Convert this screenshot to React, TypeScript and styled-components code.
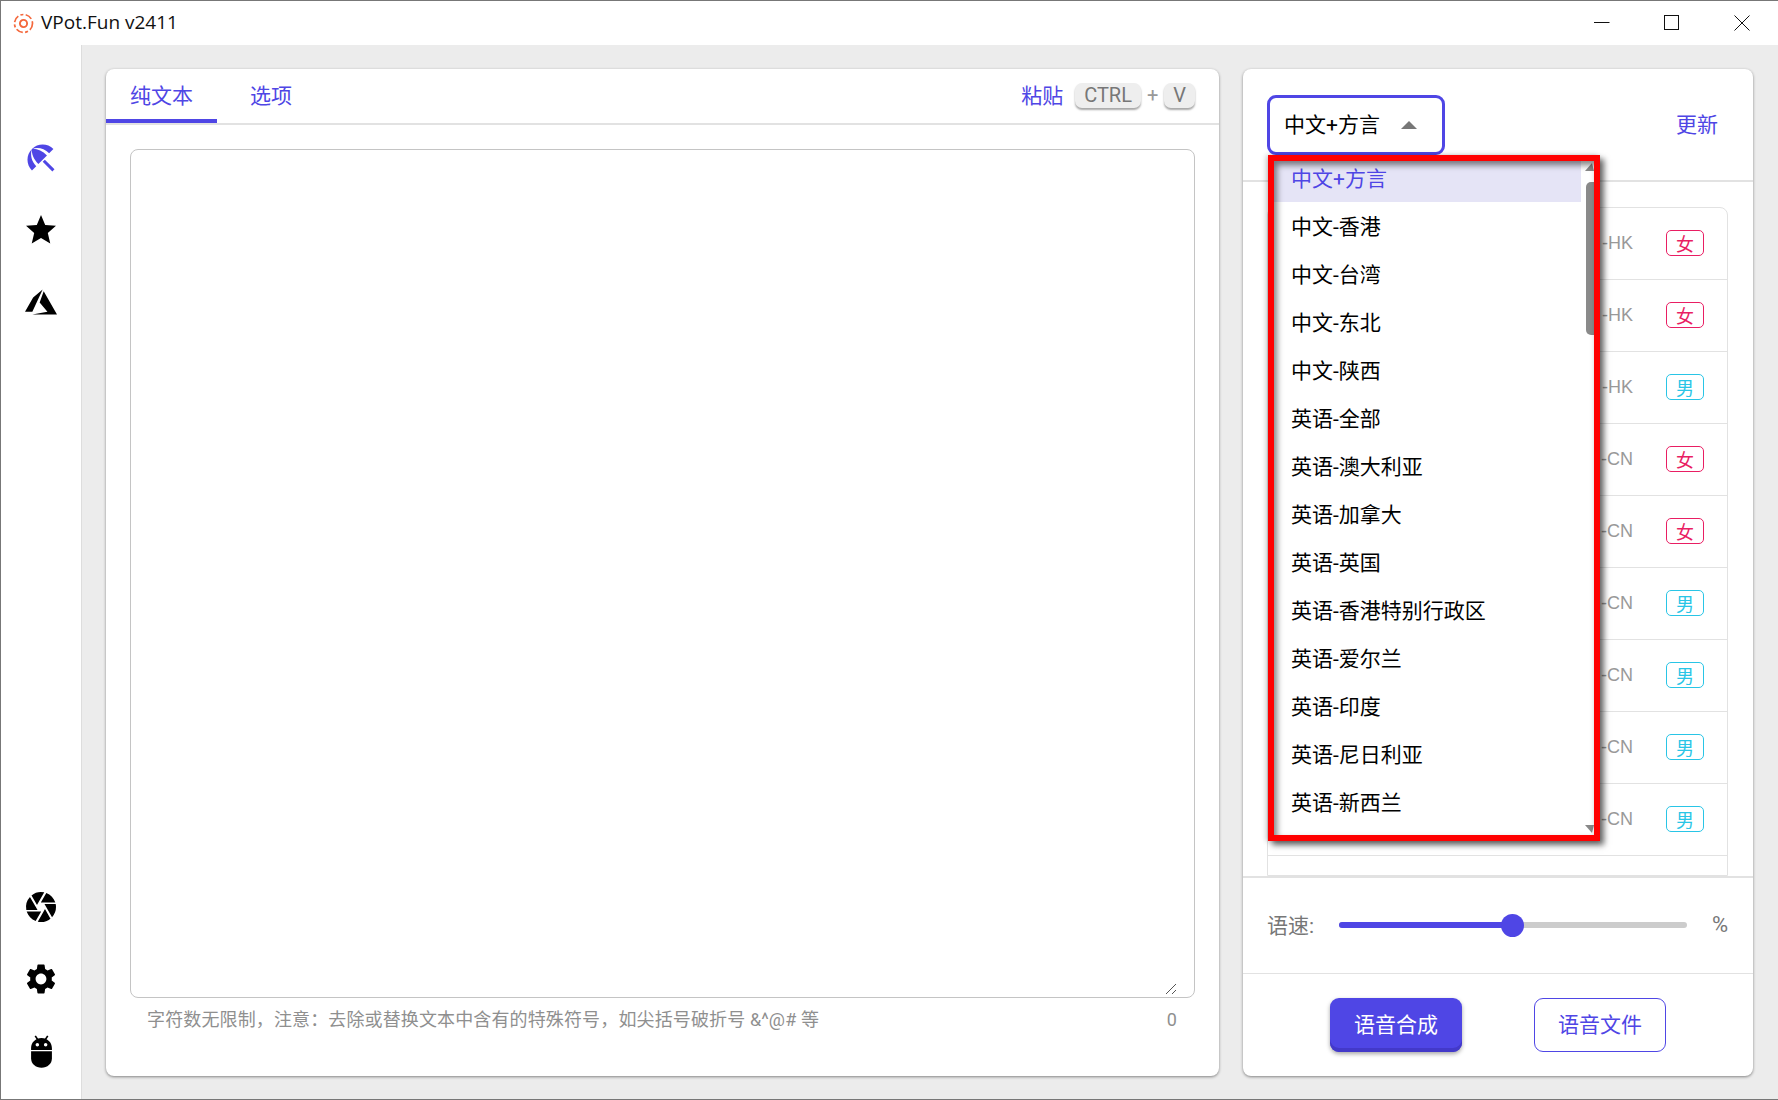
import React from 'react'
import styled, { createGlobalStyle } from 'styled-components'
import { MdBeachAccess, MdStar, MdCamera, MdSettings } from 'react-icons/md'

const accent = '#4f46e5'
const uiFont = `Roboto, "Noto Sans CJK SC", sans-serif`

const GlobalStyle = createGlobalStyle`
  html, body {
    margin: 0;
    padding: 0;
    background: #fff;
    font-family: ${uiFont};
  }
`

const regions = [
  '中文+方言', '中文-香港', '中文-台湾', '中文-东北', '中文-陕西', '英语-全部', '英语-澳大利亚',
  '英语-加拿大', '英语-英国', '英语-香港特别行政区', '英语-爱尔兰', '英语-印度', '英语-尼日利亚', '英语-新西兰',
]

const voices = [
  { code: '-HK', gender: '女' },
  { code: '-HK', gender: '女' },
  { code: '-HK', gender: '男' },
  { code: '-CN', gender: '女' },
  { code: '-CN', gender: '女' },
  { code: '-CN', gender: '男' },
  { code: '-CN', gender: '男' },
  { code: '-CN', gender: '男' },
  { code: '-CN', gender: '男' },
]

const AzureIcon = () => (
  <svg width="32" height="32" viewBox="0 0 24 24" fill="currentColor">
    <path d="M5.483 21.3H24L14.025 4.013l-3.038 8.347 5.836 6.938L5.483 21.3zM13.23 2.7L6.105 8.677 0 19.253h5.505v.014L13.23 2.7z" />
  </svg>
)

const BotIcon = () => (
  <svg width="25" height="38" viewBox="0 0 24 36" fill="currentColor">
    <path d="M6 3.5L8.6 7.4M18 3.5L15.4 7.4" stroke="currentColor" strokeWidth="1.6" fill="none" />
    <path fillRule="evenodd" d="M12 5.5c5.6 0 10 4.2 10 9.5v2H2v-2c0-5.3 4.4-9.5 10-9.5zM8 10.2a1.7 1.7 0 100 3.4 1.7 1.7 0 000-3.4zm8 0a1.7 1.7 0 100 3.4 1.7 1.7 0 000-3.4z" />
    <path d="M2 18.2h20V25c0 5.5-4.4 9-10 9S2 30.5 2 25z" />
  </svg>
)

const LogoIcon = () => (
  <svg width="21" height="21" viewBox="0 0 21 21" fill="none" stroke="#f4683c">
    <circle cx="10.5" cy="10.5" r="9" strokeWidth="1.7" strokeDasharray="7 2.4 3 2.4" />
    <circle cx="10.5" cy="10.5" r="3.6" strokeWidth="1.9" />
  </svg>
)

const ResizeGrip = () => (
  <svg width="12" height="12" viewBox="0 0 12 12" stroke="#555" fill="none">
    <path d="M1 11L11 1M7 11l4-4" />
  </svg>
)

export default function App() {
  return (
    <Window>
      <GlobalStyle />
      <TitleBar>
        <LogoIcon />
        <AppName>VPot.Fun v2411</AppName>
        <WindowControls>
          <svg width="16" height="16" viewBox="0 0 16 16" stroke="#111" fill="none">
            <path d="M0 7.5h15.5" />
          </svg>
          <svg width="16" height="16" viewBox="0 0 16 16" stroke="#111" fill="none">
            <rect x="0.5" y="0.5" width="14" height="14" />
          </svg>
          <svg width="16" height="16" viewBox="0 0 16 16" stroke="#111" fill="none">
            <path d="M0.5 0.5l15 15M15.5 0.5l-15 15" />
          </svg>
        </WindowControls>
      </TitleBar>
      <Body>
        <Sidebar>
          <NavGroup>
            <NavIcon $active><MdBeachAccess size={36} /></NavIcon>
            <NavIcon><MdStar size={36} /></NavIcon>
            <NavIcon><AzureIcon /></NavIcon>
          </NavGroup>
          <NavGroup>
            <NavIcon><MdCamera size={36} /></NavIcon>
            <NavIcon><MdSettings size={36} /></NavIcon>
            <NavIcon><BotIcon /></NavIcon>
          </NavGroup>
        </Sidebar>
        <Content>
          <EditorCard>
            <TabBar>
              <Tab $active>纯文本</Tab>
              <Tab>选项</Tab>
              <PasteHint>
                <PasteLabel>粘贴</PasteLabel>
                <Kbd>CTRL</Kbd>
                <Plus>+</Plus>
                <Kbd>V</Kbd>
              </PasteHint>
            </TabBar>
            <EditorBody>
              <TextBoxWrap>
                <TextBox />
                <GripSpot><ResizeGrip /></GripSpot>
              </TextBoxWrap>
              <HintRow>
                <span>字符数无限制，注意：去除或替换文本中含有的特殊符号，如尖括号破折号 &amp;^@# 等</span>
                <span>0</span>
              </HintRow>
            </EditorBody>
          </EditorCard>

          <VoiceCard>
            <VoiceHeader>
              <RegionSelect>
                中文+方言
                <Caret />
              </RegionSelect>
              <UpdateLink>更新</UpdateLink>
            </VoiceHeader>
            <VoiceListArea>
              <VoiceList>
                {voices.map((v, i) => (
                  <VoiceRow key={i}>
                    <VoiceCode>{v.code}</VoiceCode>
                    <GenderTag $female={v.gender === '女'}>{v.gender}</GenderTag>
                  </VoiceRow>
                ))}
              </VoiceList>
            </VoiceListArea>
            <SpeedRow>
              <SpeedLabel>语速:</SpeedLabel>
              <SliderTrack>
                <SliderFill />
                <SliderThumb />
              </SliderTrack>
              <SpeedUnit>%</SpeedUnit>
            </SpeedRow>
            <ActionRow>
              <PrimaryButton>语音合成</PrimaryButton>
              <OutlineButton>语音文件</OutlineButton>
            </ActionRow>

            <RegionMenu>
              <RegionList>
                {regions.map((r, i) => (
                  <RegionItem key={r} $selected={i === 0}>{r}</RegionItem>
                ))}
              </RegionList>
              <ScrollRail>
                <ArrowUp />
                <ScrollThumb />
                <ArrowDown />
              </ScrollRail>
            </RegionMenu>
          </VoiceCard>
        </Content>
      </Body>
    </Window>
  )
}

const Window = styled.div`
  box-sizing: border-box;
  width: 1778px;
  height: 1100px;
  display: flex;
  flex-direction: column;
  border: 1px solid #777;
  border-right: none;
  overflow: hidden;
  background: #fff;
`

const TitleBar = styled.header`
  height: 44px;
  flex: none;
  display: flex;
  align-items: center;
  padding-left: 12px;
`

const AppName = styled.div`
  margin-left: 7px;
  padding-bottom: 2px;
  font-family: "Open Sans", sans-serif;
  font-size: 19px;
  color: #111;
`

const WindowControls = styled.div`
  margin-left: auto;
  margin-right: 28px;
  display: flex;
  align-items: center;
  gap: 54px;
`

const Body = styled.div`
  flex: 1;
  min-height: 0;
  display: flex;
`

const Sidebar = styled.nav`
  box-sizing: border-box;
  width: 81px;
  flex: none;
  border-right: 1px solid #ddd;
  display: flex;
  flex-direction: column;
  justify-content: space-between;
  padding: 95px 0 30px;
`

const NavGroup = styled.div`
  display: flex;
  flex-direction: column;
  gap: 36px;
`

const NavIcon = styled.div<{ $active?: boolean }>`
  height: 36px;
  display: flex;
  align-items: center;
  justify-content: center;
  color: ${p => (p.$active ? accent : '#000')};
`

const Content = styled.main`
  flex: 1;
  min-width: 0;
  display: flex;
  gap: 24px;
  padding: 24px 25px 23px 24px;
  background: #ececec;
`

const Card = styled.section`
  background: #fff;
  border-radius: 8px;
  box-shadow: 0 1px 3px rgba(0, 0, 0, 0.45);
`

const EditorCard = styled(Card)`
  width: 1113px;
  flex: none;
  display: flex;
  flex-direction: column;
`

const TabBar = styled.div`
  box-sizing: border-box;
  height: 56px;
  flex: none;
  display: flex;
  align-items: stretch;
  border-bottom: 2px solid #e2e2e2;
  padding-right: 24px;
`

const Tab = styled.div<{ $active?: boolean }>`
  box-sizing: border-box;
  padding: 0 24px 1px;
  display: flex;
  align-items: center;
  font-size: 21px;
  color: ${accent};
  margin-right: 9px;
  border-bottom: 4px solid ${p => (p.$active ? accent : 'transparent')};
`

const PasteHint = styled.div`
  margin-left: auto;
  padding-bottom: 2px;
  display: flex;
  align-items: center;
`

const PasteLabel = styled.span`
  font-size: 21px;
  color: ${accent};
  margin-right: 12px;
  margin-top: -3px;
`

const Kbd = styled.span`
  box-sizing: border-box;
  height: 25px;
  padding: 0 9px;
  display: flex;
  align-items: center;
  border-radius: 7px;
  background: #eee;
  box-shadow: 0 2px 2px rgba(0, 0, 0, 0.35);
  font-size: 20px;
  color: #777;
`

const Plus = styled.span`
  font-size: 20px;
  color: #999;
  margin: 0 6px;
`

const EditorBody = styled.div`
  flex: 1;
  min-height: 0;
  display: flex;
  flex-direction: column;
  padding: 24px 24px 0;
`

const TextBoxWrap = styled.div`
  position: relative;
  height: 849px;
  flex: none;
`

const TextBox = styled.textarea`
  box-sizing: border-box;
  display: block;
  width: 100%;
  height: 100%;
  resize: none;
  border: 1px solid #c4c4c4;
  border-radius: 8px;
  background: #fff;
  outline: none;
`

const GripSpot = styled.span`
  position: absolute;
  right: 18px;
  bottom: 3px;
  display: flex;
`

const HintRow = styled.div`
  display: flex;
  justify-content: space-between;
  padding: 10px 18px 0 17px;
  font-size: 18px;
  letter-spacing: 0.13px;
  line-height: 24px;
  color: #8f8f8f;
`

const VoiceCard = styled(Card)`
  position: relative;
  flex: 1;
  min-width: 0;
  display: flex;
  flex-direction: column;
`

const VoiceHeader = styled.div`
  box-sizing: border-box;
  height: 113px;
  flex: none;
  display: flex;
  align-items: flex-start;
  justify-content: space-between;
  padding: 26px 35px 0 24px;
  border-bottom: 2px solid #e2e2e2;
`

const RegionSelect = styled.div`
  box-sizing: border-box;
  width: 178px;
  height: 60px;
  display: flex;
  align-items: center;
  padding: 0 0 4px 14px;
  border: 3px solid ${accent};
  border-radius: 9px;
  font-size: 21px;
  color: #000;
`

const Caret = styled.span`
  margin-left: 21px;
  margin-top: 3px;
  width: 0;
  height: 0;
  border-left: 8px solid transparent;
  border-right: 8px solid transparent;
  border-bottom: 8px solid #777;
`

const UpdateLink = styled.span`
  font-size: 21px;
  color: ${accent};
  line-height: 60px;
`

const VoiceListArea = styled.div`
  flex: 1;
  min-height: 0;
  overflow: hidden;
  padding: 25px 25px 0 24px;
`

const VoiceList = styled.div`
  border: 1px solid #e2e2e2;
  border-radius: 8px 8px 0 0;
  height: 100%;
  box-sizing: border-box;
`

const VoiceRow = styled.div`
  box-sizing: border-box;
  height: 72px;
  display: flex;
  align-items: center;
  justify-content: flex-end;
  padding: 0 23px 2px 0;
  border-bottom: 1px solid #e2e2e2;
`

const VoiceCode = styled.span`
  font-family: "Liberation Sans", sans-serif;
  font-size: 18px;
  color: #999;
  margin-right: 33px;
  margin-top: 2px;
`

const GenderTag = styled.span<{ $female?: boolean }>`
  box-sizing: border-box;
  width: 38px;
  height: 26px;
  display: flex;
  align-items: center;
  justify-content: center;
  border: 1px solid ${p => (p.$female ? '#e91e63' : '#29c5e6')};
  border-radius: 5px;
  font-size: 18px;
  color: ${p => (p.$female ? '#e91e63' : '#29c5e6')};
`

const SpeedRow = styled.div`
  box-sizing: border-box;
  height: 98px;
  flex: none;
  display: flex;
  align-items: center;
  padding: 0 25px 0 24px;
  border-top: 2px solid #e2e2e2;
  border-bottom: 1px solid #e2e2e2;
`

const SpeedLabel = styled.span`
  font-size: 21px;
  color: #777;
  margin-top: -4px;
`

const SliderTrack = styled.div`
  position: relative;
  flex: 1;
  height: 6px;
  margin: -1px 25px 0 25px;
  border-radius: 3px;
  background: #ccc;
`

const SliderFill = styled.div`
  width: 49.8%;
  height: 100%;
  border-radius: 3px;
  background: ${accent};
`

const SliderThumb = styled.div`
  position: absolute;
  left: 49.8%;
  top: 50%;
  width: 23px;
  height: 23px;
  margin: -11.5px 0 0 -11.5px;
  border-radius: 50%;
  background: ${accent};
`

const SpeedUnit = styled.span`
  font-size: 22px;
  color: #777;
  margin-top: -2px;
`

const ActionRow = styled.div`
  box-sizing: border-box;
  height: 102px;
  flex: none;
  display: flex;
  align-items: flex-start;
  justify-content: center;
  gap: 72px;
  padding-top: 24px;
`

const PrimaryButton = styled.button`
  box-sizing: border-box;
  width: 132px;
  height: 54px;
  padding: 0 0 4px;
  border: none;
  border-radius: 9px;
  background: ${accent};
  box-shadow: inset 0 -4px 0 #4339c9, 0 2px 4px rgba(0, 0, 0, 0.35);
  font-family: ${uiFont};
  font-size: 21px;
  color: #fff;
`

const OutlineButton = styled.button`
  box-sizing: border-box;
  width: 132px;
  height: 54px;
  padding: 0 0 4px;
  border: 1px solid ${accent};
  border-radius: 9px;
  background: #fff;
  font-family: ${uiFont};
  font-size: 21px;
  color: ${accent};
`

const RegionMenu = styled.div`
  position: absolute;
  left: 25px;
  top: 86px;
  box-sizing: border-box;
  width: 332px;
  height: 686px;
  display: flex;
  border: 6px solid #f00;
  background: #fff;
  overflow: hidden;
  box-shadow: 4px 4px 6px rgba(0, 0, 0, 0.6), -2px 0 5px rgba(0, 0, 0, 0.2);

  &::after {
    content: '';
    position: absolute;
    inset: 0;
    pointer-events: none;
    box-shadow: inset 3px 4px 6px rgba(0, 0, 0, 0.5);
  }
`

const RegionList = styled.div`
  flex: 1;
  min-width: 0;
  margin-top: -7px;
`

const RegionItem = styled.div<{ $selected?: boolean }>`
  box-sizing: border-box;
  height: 48px;
  display: flex;
  align-items: center;
  padding: 0 0 2px 17px;
  font-size: 21px;
  color: ${p => (p.$selected ? accent : '#000')};
  background: ${p => (p.$selected ? '#e5e4f6' : 'transparent')};
`

const ScrollRail = styled.div`
  width: 13px;
  flex: none;
  display: flex;
  flex-direction: column;
  align-items: flex-end;
`

const ArrowUp = styled.span`
  margin-top: 2px;
  width: 0;
  height: 0;
  border-left: 7px solid transparent;
  border-right: 2px solid transparent;
  border-bottom: 8px solid #888;
`

const ScrollThumb = styled.span`
  width: 8px;
  height: 153px;
  margin-top: 11px;
  border-radius: 5px 0 0 5px;
  background: #8a8a8a;
`

const ArrowDown = styled.span`
  margin-top: auto;
  margin-bottom: 2px;
  width: 0;
  height: 0;
  border-left: 7px solid transparent;
  border-right: 2px solid transparent;
  border-top: 8px solid #888;
`
